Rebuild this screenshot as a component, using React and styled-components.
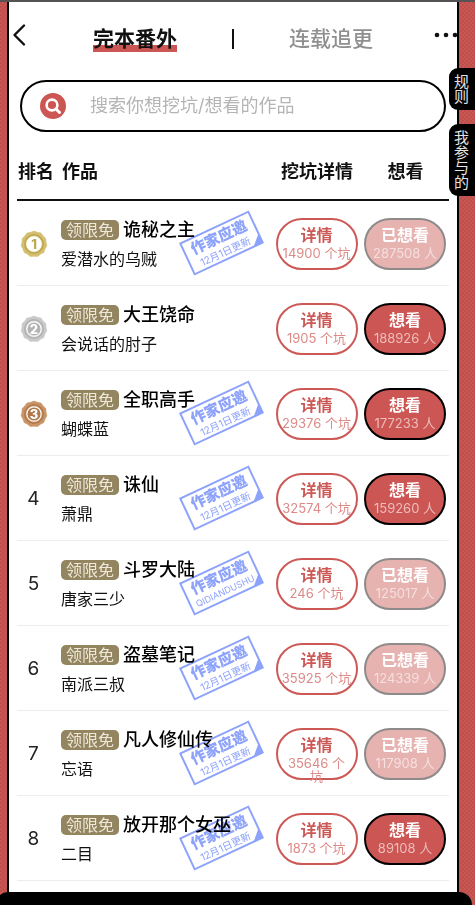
import styled, { createGlobalStyle } from "styled-components";

const GlobalStyle = createGlobalStyle`
  * {
    box-sizing: border-box;
  }

  body {
    margin: 0;
    background-color: black;
    font-family: Inter, "Noto Sans CJK SC", sans-serif;
  }

  button,
  input {
    font-family: inherit;
    margin: 0;
    padding: 0;
    border: none;
    background: none;
    cursor: pointer;
  }
`;

const Page = styled.div`
  display: flex;
  flex-direction: column;
  min-height: 100vh;
  position: relative;
  overflow: hidden;
  border-top: 2px solid #555353;
  background-color: #cb5653;
  background-image:
    radial-gradient(circle at 1px 1px, #bd4f4c 1px, transparent 1px),
    radial-gradient(circle at 3px 3px, #bd4f4c 1px, transparent 1px);
  background-size: 4px 4px;
`;

const Sheet = styled.main`
  flex: 1;
  margin: 0 16px 0 7px;
  border: solid black;
  border-width: 0 2px;
  background-color: white;
`;

const Header = styled.header`
  display: grid;
  grid-template-columns: 24px 1fr 24px;
  align-items: center;
  height: 74px;
`;

const IconButton = styled.button`
  display: flex;
  padding: 0 0 8px ${({ $inset }) => ($inset ? "3px" : "0")};
`;

const Tabs = styled.nav`
  display: flex;
  align-items: center;
  justify-content: center;
  gap: 55px;
`;

const Tab = styled.button`
  font-size: 21px;
  line-height: 26px;
  font-weight: ${({ $active }) => ($active ? 600 : 500)};
  white-space: nowrap;
  color: ${({ $active }) => ($active ? "#111" : "#8f8f8f")};
  background: ${({ $active }) =>
    $active ? "linear-gradient(#cb5653, #cb5653) bottom / 100% 7px no-repeat" : "none"};
`;

const Divider = styled.span`
  width: 2px;
  height: 20px;
  background-color: #111;
`;

const SearchBar = styled.label`
  display: flex;
  align-items: center;
  gap: 24px;
  height: 52px;
  margin: 4px 11px 11px;
  padding: 0 18px;
  border: 2px solid black;
  border-radius: 26px;

  svg {
    flex-shrink: 0;
  }
`;

const SearchInput = styled.input`
  flex: 1;
  min-width: 0;
  font-size: 18px;
  line-height: 26px;
  outline: none;
  cursor: text;

  &::placeholder {
    color: #b4b4b4;
    opacity: 1;
  }
`;

const RankTable = styled.table`
  width: calc(100% - 16px);
  margin: 0 8px;
  table-layout: fixed;
  border-collapse: separate;
  border-spacing: 0;
`;

const HeadCell = styled.th`
  width: ${({ $width }) => $width || "auto"};
  height: 58px;
  padding: 0 0 2px 1px;
  border-bottom: 2px solid #111;
  font-size: 18px;
  font-weight: 700;
  color: #111;
  white-space: nowrap;
  text-align: ${({ $center }) => ($center ? "center" : "left")};
`;

const Cell = styled.td`
  position: relative;
  height: 85px;
  padding: 1px 0 0;
  border-bottom: 1px solid #ececec;
`;

const Rank = styled.div`
  display: flex;
  justify-content: center;
  width: 33px;
  font-size: 19px;
  color: #222;
`;

const Work = styled.div`
  display: flex;
  flex-direction: column;
  gap: 5px;
  padding-top: 2px;
`;

const TitleLine = styled.div`
  display: flex;
  align-items: center;
  gap: 4px;
  height: 24px;
  white-space: nowrap;
`;

const FreeBadge = styled.span`
  padding: 0 5px;
  border-radius: 5px;
  background-color: #93855f;
  color: #eee8da;
  font-size: 16px;
  line-height: 20px;
`;

const Title = styled.span`
  font-size: 18px;
  line-height: 24px;
  font-weight: 500;
  color: black;
`;

const Author = styled.span`
  font-size: 16px;
  line-height: 24px;
  color: #111;
`;

const StampBox = styled.div`
  position: absolute;
  top: 24px;
  left: 122px;
  width: 77px;
  height: 36px;
  padding-top: 1px;
  border: 2px solid #8ca2fb;
  color: #8ca2fb;
  mix-blend-mode: multiply;
  transform: rotate(-25deg);
  text-align: center;
  white-space: nowrap;
`;

const StampFold = styled.svg`
  position: absolute;
  right: -1px;
  bottom: -1px;
`;

const StampTitle = styled.div`
  font-size: 15px;
  line-height: 18px;
  font-weight: 900;
`;

const StampNote = styled.div`
  font-size: ${({ $small }) => ($small ? "9px" : "10px")};
  line-height: 12px;
`;

const themes = {
  detail: { border: "#cd5956", background: "white", color: "#cd5956", count: "#dc8a87" },
  want: { border: "black", background: "#cb5653", color: "white", count: "#eebdbb" },
  wanted: { border: "#8e8a8a", background: "#e6b3b1", color: "white", count: "#f5dfde" },
};

const Pill = styled.button`
  display: flex;
  flex-direction: column;
  align-items: center;
  gap: 2px;
  width: 82px;
  height: 52px;
  margin: 0 auto;
  padding-top: 5px;
  border: 2px solid ${({ $kind }) => themes[$kind].border};
  border-radius: 26px;
  background-color: ${({ $kind }) => themes[$kind].background};
  color: ${({ $kind }) => themes[$kind].color};
  font-size: 16px;
  line-height: 20px;
  font-weight: 600;
`;

const Count = styled.span`
  font-size: 13px;
  line-height: 13px;
  font-weight: 400;
  white-space: pre;
  color: ${({ $kind }) => themes[$kind].count};
`;

const SideTabs = styled.aside`
  position: absolute;
  top: 66px;
  right: 0;
  display: flex;
  flex-direction: column;
  gap: 14px;
`;

const SideTab = styled.button`
  width: 26px;
  padding: 6px 6px 6px 5px;
  border-radius: 9px 0 0 9px;
  background-color: black;
  color: #e4e4e4;
  font-size: 15px;
  line-height: 15px;
  word-break: break-all;
`;

const BottomBar = styled.footer`
  height: 13px;
  margin: 0 3px 0 -4px;
  border-radius: 12px 13px 0 0;
  background-color: black;
`;

const works = [
  { title: "诡秘之主", author: "爱潜水的乌贼", pits: "14900 个坑", fans: 287508, wanted: true, stamp: "12月1日更新" },
  { title: "大王饶命", author: "会说话的肘子", pits: "1905 个坑", fans: 188926 },
  { title: "全职高手", author: "蝴蝶蓝", pits: "29376 个坑", fans: 177233, stamp: "12月1日更新" },
  { title: "诛仙", author: "萧鼎", pits: "32574 个坑", fans: 159260, stamp: "12月1日更新" },
  { title: "斗罗大陆", author: "唐家三少", pits: "246 个坑", fans: 125017, wanted: true, stamp: "QIDIANDUSHU" },
  { title: "盗墓笔记", author: "南派三叔", pits: "35925 个坑", fans: 124339, wanted: true, stamp: "12月1日更新" },
  { title: "凡人修仙传", author: "忘语", pits: "35646 个\n坑", fans: 117908, wanted: true, stamp: "12月1日更新" },
  { title: "放开那个女巫", author: "二目", pits: "1873 个坑", fans: 89108, stamp: "12月1日更新" },
];

const medalColors = [
  { outer: "#d3bf70", inner: "#bfa854" },
  { outer: "#c9c9c9", inner: "#b3b3b3" },
  { outer: "#c99467", inner: "#b07a4c" },
];

// eleven shallow scallops around the rim
const medalPath = (() => {
  const count = 11;
  const point = (angle, radius) =>
    `${(14 + radius * Math.sin(angle)).toFixed(2)} ${(14 - radius * Math.cos(angle)).toFixed(2)}`;
  let d = `M${point(0, 13)}`;
  for (let i = 0; i < count; i++) {
    const start = (i * 2 * Math.PI) / count;
    const step = (2 * Math.PI) / count;
    d += ` Q${point(start + step / 2, 11.8)} ${point(start + step, 13)}`;
  }
  return d + "Z";
})();

function Medal({ rank }) {
  const { outer, inner } = medalColors[rank - 1];
  return (
    <svg width="28" height="28" viewBox="0 0 28 28">
      <path d={medalPath} fill={outer} stroke={outer} strokeWidth="0.6" strokeLinejoin="round" />
      <circle cx="14" cy="14" r="9.2" fill="none" stroke={inner} strokeWidth="1.6" />
      <circle cx="14" cy="14" r="7.2" fill={rank === 1 ? "white" : inner} stroke="white" strokeWidth="1.2" />
      <text
        x="14"
        y="18.5"
        textAnchor="middle"
        fontFamily="Inter, sans-serif"
        fontSize="13"
        fontWeight="800"
        fill={rank === 1 ? inner : "white"}
      >
        {rank}
      </text>
    </svg>
  );
}

function Stamp({ note }) {
  return (
    <StampBox>
      <StampTitle>作家应邀</StampTitle>
      <StampNote $small={note === "QIDIANDUSHU"}>{note}</StampNote>
      <StampFold width="10" height="10" viewBox="0 0 10 10">
        <path d="M10 0V10H0Z" fill="#8ca2fb" />
      </StampFold>
    </StampBox>
  );
}

function WorkRow({ work, rank }) {
  const kind = work.wanted ? "wanted" : "want";
  return (
    <tr>
      <Cell>
        <Rank>{rank <= 3 ? <Medal rank={rank} /> : rank}</Rank>
      </Cell>
      <Cell>
        <Work>
          <TitleLine>
            <FreeBadge>领限免</FreeBadge>
            <Title>{work.title}</Title>
          </TitleLine>
          <Author>{work.author}</Author>
        </Work>
        {work.stamp && <Stamp note={work.stamp} />}
      </Cell>
      <Cell>
        <Pill $kind="detail">
          详情
          <Count $kind="detail">{work.pits}</Count>
        </Pill>
      </Cell>
      <Cell>
        <Pill $kind={kind}>
          {work.wanted ? "已想看" : "想看"}
          <Count $kind={kind}>{work.fans} 人</Count>
        </Pill>
      </Cell>
    </tr>
  );
}

function App() {
  return (
    <Page>
      <GlobalStyle />
      <Sheet>
        <Header>
          <IconButton $inset aria-label="返回">
            <svg width="14" height="24" viewBox="0 0 14 24" fill="none" stroke="#111" strokeWidth="2.4">
              <path d="M12 2.5L2.5 12L12 21.5" strokeLinecap="round" strokeLinejoin="round" />
            </svg>
          </IconButton>
          <Tabs>
            <Tab $active>完本番外</Tab>
            <Divider />
            <Tab>连载追更</Tab>
          </Tabs>
          <IconButton aria-label="更多">
            <svg width="24" height="24" viewBox="0 0 24 24" fill="#111">
              <circle cx="4" cy="12" r="2.3" />
              <circle cx="13" cy="12" r="2.3" />
              <circle cx="22" cy="12" r="2.3" />
            </svg>
          </IconButton>
        </Header>
        <SearchBar>
          <svg width="26" height="26" viewBox="0 0 26 26" fill="none">
            <circle cx="13" cy="13" r="13" fill="#cb5653" />
            <circle cx="12" cy="12" r="5.4" stroke="white" strokeWidth="2.6" />
            <path d="M16 16L19.5 19.5" stroke="white" strokeWidth="3" strokeLinecap="round" />
          </svg>
          <SearchInput type="text" aria-label="搜索" placeholder="搜索你想挖坑/想看的作品" />
        </SearchBar>
        <RankTable>
          <thead>
            <tr>
              <HeadCell $width="44px">排名</HeadCell>
              <HeadCell>作品</HeadCell>
              <HeadCell $width="89px" $center>
                挖坑详情
              </HeadCell>
              <HeadCell $width="88px" $center>
                想看
              </HeadCell>
            </tr>
          </thead>
          <tbody>
            {works.map((work, index) => (
              <WorkRow key={work.title} work={work} rank={index + 1} />
            ))}
          </tbody>
        </RankTable>
      </Sheet>
      <SideTabs>
        <SideTab>规则</SideTab>
        <SideTab>我参与的</SideTab>
      </SideTabs>
      <BottomBar />
    </Page>
  );
}

export default App;
